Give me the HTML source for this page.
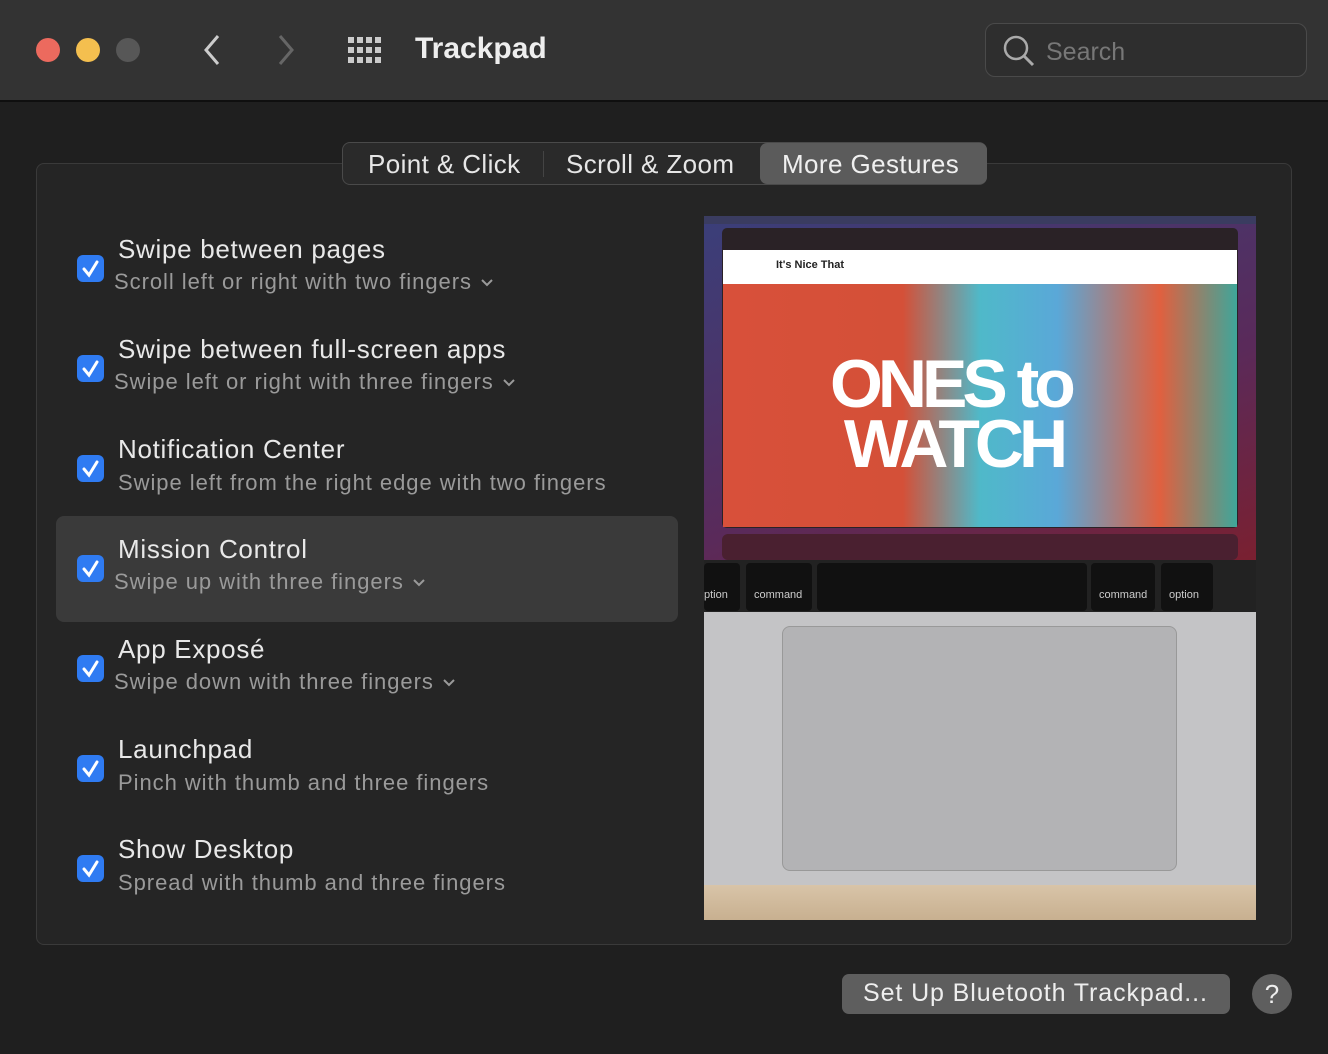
<!DOCTYPE html>
<html><head><meta charset="utf-8"><style>
*{margin:0;padding:0;box-sizing:border-box}
body{width:1328px;height:1054px;background:#1f1f1f;font-family:"Liberation Sans",sans-serif;position:relative;overflow:hidden;color:#e6e6e6}
.top{position:absolute;left:0;top:0;width:1328px;height:102px;background:#333;border-bottom:2px solid #0f0f0f}
.dot{position:absolute;top:38px;width:24px;height:24px;border-radius:50%}
.a{position:absolute}
.panel{position:absolute;left:36px;top:163px;width:1256px;height:782px;border:1px solid #3a3a3a;border-radius:8px;background:#252525}
.tabs{position:absolute;left:342px;top:142px;width:645px;height:43px;border:1px solid #4a4a4a;border-radius:8px;background:#2a2a2a;font-size:26px;letter-spacing:0.4px}
.cb{position:absolute;left:77px;width:27px;height:27px;border-radius:6px;background:#2f7bf2}
.t{position:absolute;left:118px;font-size:26px;color:#e8e8e8;letter-spacing:0.7px}
.s{position:absolute;left:114px;font-size:22px;color:#9a9a9a;letter-spacing:0.95px;white-space:nowrap}
.s svg{margin-left:8px;vertical-align:middle}
</style></head><body>
<div class="top">
<div class="dot" style="left:36px;background:#ec6a5e"></div>
<div class="dot" style="left:76px;background:#f4bf4f"></div>
<div class="dot" style="left:116px;background:#575757"></div>
<svg class="a" style="left:200px;top:34px" width="100" height="32"><path d="M18 2 L6 16 L18 30" stroke="#ccc" stroke-width="3" fill="none"/><path d="M80 2 L92 16 L80 30" stroke="#666" stroke-width="3" fill="none"/></svg>
<svg class="a" style="left:348px;top:37px" width="38" height="26" fill="#ccc"><g id="r"><rect x="0" y="0" width="6" height="6"/><rect x="9" y="0" width="6" height="6"/><rect x="18" y="0" width="6" height="6"/><rect x="27" y="0" width="6" height="6"/></g><use href="#r" y="10"/><use href="#r" y="20"/></svg>
<div class="a" style="left:415px;top:32px;font-size:30px;font-weight:bold;color:#eee">Trackpad</div>
<div class="a" style="left:985px;top:23px;width:322px;height:54px;border:1px solid #4a4a4a;border-radius:10px;background:#2e2e2e"></div>
<svg class="a" style="left:1002px;top:34px" width="34" height="34"><circle cx="14" cy="14" r="11" stroke="#aaa" stroke-width="2.5" fill="none"/><path d="M22 22 L31 31" stroke="#aaa" stroke-width="3"/></svg>
<div class="a" style="left:1046px;top:38px;font-size:25px;color:#777">Search</div>
</div>
<div class="panel"></div>
<div class="tabs">
<div class="a" style="left:25px;top:6px">Point &amp; Click</div>
<div class="a" style="left:200px;top:8px;width:1px;height:26px;background:#444"></div>
<div class="a" style="left:223px;top:6px">Scroll &amp; Zoom</div>
<div class="a" style="left:417px;top:0;width:227px;height:41px;background:#5b5b5b;border-radius:7px"></div>
<div class="a" style="left:439px;top:6px;color:#f0f0f0">More Gestures</div>
</div>
<div class="a" style="left:56px;top:516px;width:622px;height:106px;background:#3a3a3a;border-radius:8px"></div>
<svg width="0" height="0" style="position:absolute"><defs><symbol id="ck" viewBox="0 0 27 27"><path d="M7 14 L12 20 L20 7" stroke="#fff" stroke-width="3" fill="none" stroke-linecap="round"/></symbol><symbol id="cv" viewBox="0 0 14 10"><path d="M2 2 L7 7 L12 2" stroke="#9a9a9a" stroke-width="2" fill="none"/></symbol></defs></svg>

<div class="cb" style="top:255px"><svg width="27" height="27"><use href="#ck"/></svg></div>
<div class="t" style="top:234px">Swipe between pages</div>
<div class="s" style="top:269px">Scroll left or right with two fingers<svg width="14" height="10"><use href="#cv"/></svg></div>

<div class="cb" style="top:355px"><svg width="27" height="27"><use href="#ck"/></svg></div>
<div class="t" style="top:334px">Swipe between full-screen apps</div>
<div class="s" style="top:369px">Swipe left or right with three fingers<svg width="14" height="10"><use href="#cv"/></svg></div>

<div class="cb" style="top:455px"><svg width="27" height="27"><use href="#ck"/></svg></div>
<div class="t" style="top:434px">Notification Center</div>
<div class="s" style="top:470px;left:118px">Swipe left from the right edge with two fingers</div>

<div class="cb" style="top:555px"><svg width="27" height="27"><use href="#ck"/></svg></div>
<div class="t" style="top:534px">Mission Control</div>
<div class="s" style="top:569px">Swipe up with three fingers<svg width="14" height="10"><use href="#cv"/></svg></div>

<div class="cb" style="top:655px"><svg width="27" height="27"><use href="#ck"/></svg></div>
<div class="t" style="top:634px">App Exposé</div>
<div class="s" style="top:669px">Swipe down with three fingers<svg width="14" height="10"><use href="#cv"/></svg></div>

<div class="cb" style="top:755px"><svg width="27" height="27"><use href="#ck"/></svg></div>
<div class="t" style="top:734px">Launchpad</div>
<div class="s" style="top:770px;left:118px">Pinch with thumb and three fingers</div>

<div class="cb" style="top:855px"><svg width="27" height="27"><use href="#ck"/></svg></div>
<div class="t" style="top:834px">Show Desktop</div>
<div class="s" style="top:870px;left:118px">Spread with thumb and three fingers</div>

<!-- illustration -->
<div class="a" style="left:704px;top:216px;width:552px;height:704px;background:#c9c9c9;overflow:hidden">
 <div class="a" style="left:0;top:0;width:552px;height:346px;background:linear-gradient(160deg,#3a3f7a,#5a2a5a 60%,#7a2030)"></div>
 <div class="a" style="left:0;top:0;width:552px;height:8px;background:#3a3c60"></div>
 <div class="a" style="left:18px;top:12px;width:516px;height:300px;background:#2a2226;border-radius:5px"></div>
 <div class="a" style="left:19px;top:34px;width:514px;height:34px;background:#fff"></div>
 <div class="a" style="left:72px;top:43px;font-size:11px;color:#222;font-weight:bold">It's Nice That</div>
 <div class="a" style="left:19px;top:68px;width:514px;height:243px;background:linear-gradient(90deg,#d8503a 0%,#d45038 35%,#4fb9c9 50%,#5aa8d8 65%,#e0603f 85%,#3fa69a 100%)"></div>
 <div class="a" style="left:126px;top:138px;font-size:68px;font-weight:bold;color:#fff;letter-spacing:-5px;line-height:60px">ONES to<br>&nbsp;WATCH</div>
 <div class="a" style="left:18px;top:318px;width:516px;height:26px;background:#4a2030;border-radius:6px"></div>
 <div class="a" style="left:0;top:344px;width:552px;height:52px;background:#222"></div>
 <div class="a" style="left:42px;top:347px;width:66px;height:48px;background:#111;border-radius:4px;color:#ccc;font-size:11px;padding:26px 0 0 8px">command</div>
 <div class="a" style="left:113px;top:347px;width:270px;height:48px;background:#111;border-radius:4px"></div>
 <div class="a" style="left:387px;top:347px;width:64px;height:48px;background:#111;border-radius:4px;color:#ccc;font-size:11px;padding:26px 0 0 8px">command</div>
 <div class="a" style="left:457px;top:347px;width:52px;height:48px;background:#111;border-radius:4px;color:#ccc;font-size:11px;padding:26px 0 0 8px">option</div>
 <div class="a" style="left:0;top:347px;width:36px;height:48px;background:#111;border-radius:4px;color:#ccc;font-size:11px;padding:26px 0 0 0">ption</div>
 <div class="a" style="left:0;top:396px;width:552px;height:273px;background:#c4c4c6"></div>
 <div class="a" style="left:78px;top:410px;width:395px;height:245px;background:#b3b3b5;border:1px solid #999;border-radius:8px"></div>
 <div class="a" style="left:0;top:669px;width:552px;height:35px;background:linear-gradient(#d8c4a8,#c8b090)"></div>
</div>

<div class="a" style="left:842px;top:974px;width:388px;height:40px;background:#5e5e5e;border-radius:7px;font-size:25px;color:#eee;padding:5px 0 0 21px;letter-spacing:0.9px;white-space:nowrap">Set Up Bluetooth Trackpad...</div>
<div class="a" style="left:1252px;top:974px;width:40px;height:40px;background:#5e5e5e;border-radius:50%;font-size:26px;color:#eee;text-align:center;line-height:40px">?</div>
</body></html>
